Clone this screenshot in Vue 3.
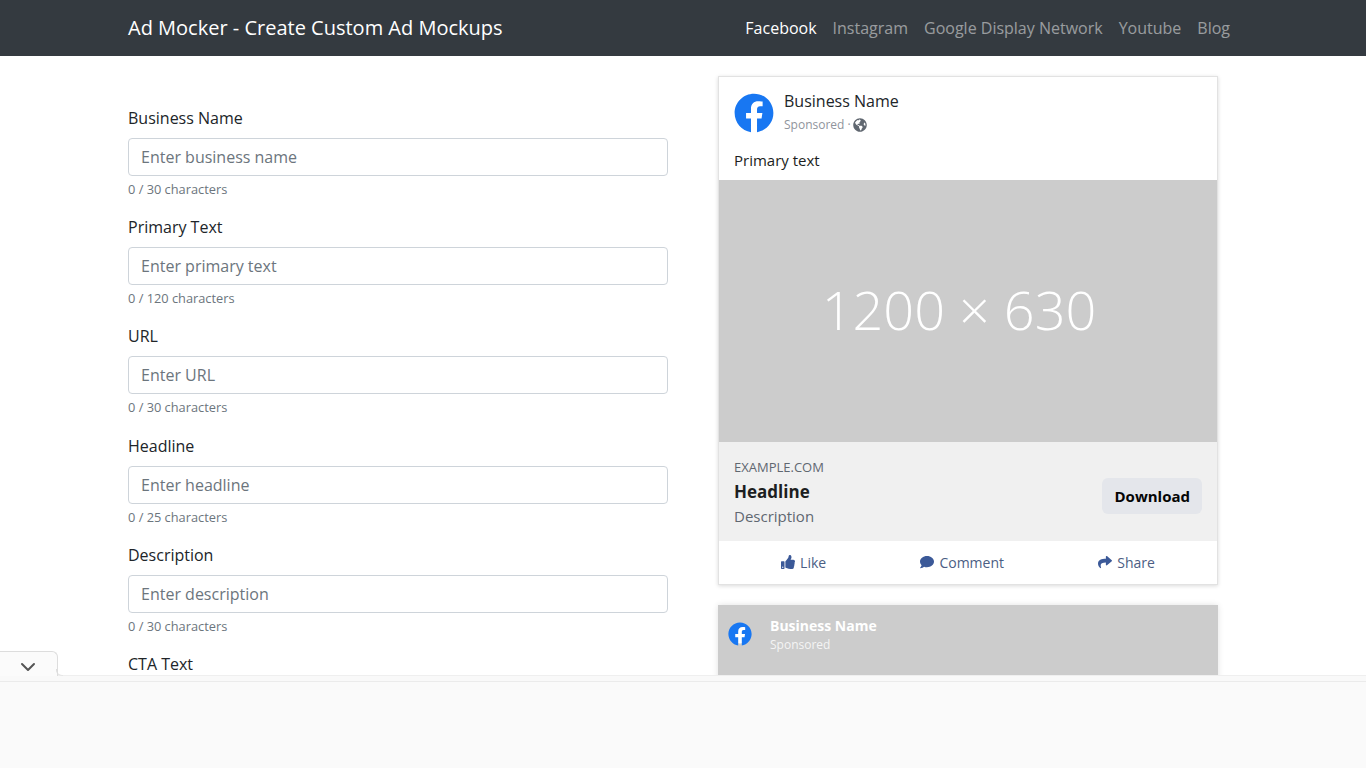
<template>
  <div class="page">
    <nav class="navbar">
      <a class="brand">Ad Mocker - Create Custom Ad Mockups</a>
      <ul class="nav-links">
        <li v-for="(link, i) in links" :key="link" :class="{ active: i === 0 }">{{ link }}</li>
      </ul>
    </nav>

    <main class="content">
      <form class="ad-form">
        <div v-for="field in fields" :key="field.label" class="form-group">
          <label>{{ field.label }}</label>
          <input type="text" :placeholder="field.placeholder" />
          <small>0 / {{ field.max }} characters</small>
        </div>
      </form>

      <section class="previews">
        <article class="fb-card">
          <header class="fb-head">
            <svg class="fb-logo" viewBox="0 0 512 512">
              <circle cx="256" cy="256" r="200" fill="#fff" />
              <path fill="#1877f2" :d="fbPath" />
            </svg>
            <div class="fb-who">
              <div class="fb-name">Business Name</div>
              <div class="fb-sponsored">
                Sponsored ·
                <svg class="globe" viewBox="0 0 496 512"><path fill="#606770" :d="globePath" /></svg>
              </div>
            </div>
          </header>
          <p class="fb-primary">Primary text</p>
          <div class="fb-image"><span>1200 × 630</span></div>
          <div class="fb-meta">
            <div>
              <div class="fb-url">EXAMPLE.COM</div>
              <div class="fb-headline">Headline</div>
              <div class="fb-desc">Description</div>
            </div>
            <button type="button" class="fb-cta">Download</button>
          </div>
          <div class="fb-actions">
            <span class="act">
              <svg viewBox="0 0 512 512"><path :d="likePath" /></svg>Like
            </span>
            <span class="act">
              <svg viewBox="0 0 512 512"><path :d="commentPath" /></svg>Comment
            </span>
            <span class="act">
              <svg viewBox="0 0 512 512"><path :d="sharePath" /></svg>Share
            </span>
          </div>
        </article>

        <article class="story-card">
          <svg class="story-logo" viewBox="0 0 512 512">
            <circle cx="256" cy="256" r="200" fill="#fff" />
            <path fill="#1877f2" :d="fbPath" />
          </svg>
          <div>
            <div class="story-name">Business Name</div>
            <div class="story-sponsored">Sponsored</div>
          </div>
        </article>
      </section>
    </main>

    <div class="bottom-panel">
      <button type="button" class="panel-toggle" aria-label="Collapse">
        <svg viewBox="0 0 16 10" width="16" height="10" fill="none" stroke="#555" stroke-width="2" stroke-linecap="round" stroke-linejoin="round">
          <polyline points="2 2 8 8 14 2"></polyline>
        </svg>
      </button>
    </div>
  </div>
</template>

<script setup>
const links = ['Facebook', 'Instagram', 'Google Display Network', 'Youtube', 'Blog'];

const fields = [
  { label: 'Business Name', placeholder: 'Enter business name', max: 30 },
  { label: 'Primary Text', placeholder: 'Enter primary text', max: 120 },
  { label: 'URL', placeholder: 'Enter URL', max: 30 },
  { label: 'Headline', placeholder: 'Enter headline', max: 25 },
  { label: 'Description', placeholder: 'Enter description', max: 30 },
  { label: 'CTA Text', placeholder: 'Enter CTA text', max: 20 }
];

const fbPath = 'M504 256C504 119 393 8 256 8S8 119 8 256c0 123.78 90.69 226.38 209.25 245V327.69h-63V256h63v-54.64c0-62.15 37-96.48 93.67-96.48 27.14 0 55.52 4.84 55.52 4.84v61h-31.28c-30.8 0-40.41 19.12-40.41 38.73V256h68.78l-11 71.69h-57.78V501C413.31 482.38 504 379.78 504 256z';
const globePath = 'M248 8C111.03 8 0 119.03 0 256s111.03 248 248 248 248-111.03 248-248S384.97 8 248 8zm82.29 357.6c-3.9 3.88-7.99 7.95-11.31 11.28-2.99 3-5.1 6.7-6.17 10.71-1.51 5.66-2.73 11.38-4.77 16.87l-17.39 46.85c-13.76 3-28 4.69-42.65 4.69v-27.38c1.69-12.62-7.64-36.26-22.63-51.25-6-6-9.37-14.14-9.37-22.63v-32.01c0-11.64-6.27-22.34-16.46-27.97-14.37-7.95-34.81-19.06-48.81-26.11-11.48-5.78-22.1-13.14-31.65-21.75l-.8-.72a114.792 114.792 0 0 1-18.06-20.74c-9.38-13.77-24.66-36.42-34.59-51.14 20.47-45.5 57.36-82.04 103.2-101.89l24.01 12.01C203.48 89.74 216 82.01 216 70.11v-11.3c7.99-1.29 16.12-2.11 24.39-2.42l28.3 28.3c6.25 6.25 6.25 16.38 0 22.63L264 112l-10.34 10.34c-3.12 3.12-3.12 8.19 0 11.31l4.69 4.69c3.12 3.12 3.12 8.19 0 11.31l-8 8a8.008 8.008 0 0 1-5.66 2.34h-8.99c-2.08 0-4.08.81-5.58 2.27l-9.92 9.65a8.008 8.008 0 0 0-1.58 9.31l15.59 31.19c2.66 5.32-1.21 11.58-7.15 11.58h-5.64c-1.93 0-3.79-.7-5.24-1.96l-9.28-8.06a16.017 16.017 0 0 0-15.55-3.1l-31.17 10.39a11.95 11.95 0 0 0-8.17 11.34c0 4.53 2.56 8.66 6.61 10.69l11.08 5.54c9.41 4.71 19.79 7.16 30.31 7.16s22.59 27.29 32 32h66.75c8.49 0 16.62 3.37 22.63 9.37l13.69 13.69a30.503 30.503 0 0 1 8.93 21.57 46.536 46.536 0 0 1-13.72 32.98zM417 274.25c-5.79-1.45-10.84-5-14.15-9.97l-17.98-26.97a23.97 23.97 0 0 1 0-26.62l19.59-29.38c2.32-3.47 5.5-6.29 9.24-8.15l12.98-6.49C440.2 193.59 448 223.87 448 256c0 8.67-.74 17.16-1.82 25.54L417 274.25z';
const likePath = 'M104 224H24c-13.255 0-24 10.745-24 24v240c0 13.255 10.745 24 24 24h80c13.255 0 24-10.745 24-24V248c0-13.255-10.745-24-24-24zM64 472c-13.255 0-24-10.745-24-24s10.745-24 24-24 24 10.745 24 24-10.745 24-24 24zM384 81.452c0 42.416-25.97 66.208-33.277 94.548h101.723c33.397 0 59.397 27.746 59.553 58.098.084 17.938-7.546 37.249-19.439 49.197l-.11.11c9.836 23.337 8.237 56.037-9.308 79.469 8.681 25.895-.069 57.704-16.382 74.757 4.298 17.598 2.244 32.575-6.148 44.632C440.202 511.587 389.616 512 346.839 512l-2.845-.001c-48.287-.017-87.806-17.598-119.56-31.725-15.957-7.099-36.821-15.887-52.651-16.178-6.54-.12-11.783-5.457-11.783-11.998v-213.77c0-3.2 1.282-6.271 3.558-8.521 39.614-39.144 56.648-80.587 89.117-113.111 14.804-14.832 20.188-37.236 25.393-58.902C282.515 39.293 291.817 0 312 0c24 0 72 8 72 81.452z';
const commentPath = 'M256 32C114.6 32 0 125.1 0 240c0 49.6 21.4 95 57 130.7C44.5 421.1 2.7 466 2.2 466.5c-2.2 2.3-2.8 5.7-1.5 8.7S4.8 480 8 480c66.3 0 116-31.8 140.6-51.4 32.7 12.3 69 19.4 107.4 19.4 141.4 0 256-93.1 256-208S397.4 32 256 32z';
const sharePath = 'M503.691 189.836L327.687 37.851C312.281 24.546 288 35.347 288 56.015v80.053C127.371 137.907 0 170.1 0 322.326c0 61.441 39.581 122.309 83.333 154.132 13.653 9.931 33.111-2.533 28.077-18.631C66.066 312.814 132.917 274.316 288 272.085V360c0 20.7 24.3 31.453 39.687 18.164l176.004-152c11.071-9.562 11.086-26.753 0-36.328z';
</script>

<style scoped>
.page {
  display: flex;
  flex-direction: column;
  height: 768px;
  overflow: hidden;
  font-family: "Open Sans", "Liberation Sans", sans-serif;
  color: #212529;
  background: #fff;
}

.navbar {
  flex: none;
  display: flex;
  align-items: center;
  justify-content: space-between;
  height: 56px;
  padding: 0 128px;
  background: #343a40;
  box-sizing: border-box;
}

.brand {
  padding-bottom: 2px;
  font-size: 20px;
  color: #fff;
}

.nav-links {
  display: flex;
  margin: 0;
  padding: 0;
  list-style: none;
  font-size: 16px;
  color: rgba(255, 255, 255, 0.5);
}

.nav-links li {
  padding: 0 8px;
}

.nav-links li.active {
  color: #fff;
}

.content {
  flex: 1;
  min-height: 0;
  overflow: hidden;
  display: grid;
  grid-template-columns: 540px 500px;
  column-gap: 50px;
  align-items: start;
  padding: 20px 0 0 128px;
}

.ad-form {
  padding-top: 30px;
}

.form-group {
  margin-bottom: 16px;
}

.form-group label {
  display: block;
  margin-bottom: 8px;
  font-size: 16px;
  line-height: 24px;
}

.form-group input {
  display: block;
  width: 100%;
  height: 38px;
  padding: 6px 12px;
  box-sizing: border-box;
  border: 1px solid #ced4da;
  border-radius: 4px;
  font: inherit;
  font-size: 16px;
  color: #495057;
  outline: none;
}

.form-group input::placeholder {
  color: #6c757d;
  opacity: 1;
}

.form-group small {
  display: block;
  margin-top: 4px;
  font-size: 12.8px;
  line-height: 19.2px;
  color: #6c757d;
}

.fb-card {
  border: 1px solid #e2e2e2;
  box-shadow: 0 1px 4px rgba(0, 0, 0, 0.15);
  background: #fff;
}

.fb-head {
  display: flex;
  align-items: flex-start;
  padding: 12px 15px 0;
}

.fb-logo {
  width: 40px;
  height: 40px;
  margin: 4px 10px 0 0;
}

.fb-name {
  font-size: 16px;
  line-height: 24px;
}

.fb-sponsored {
  display: flex;
  align-items: center;
  gap: 2px;
  margin-top: 1px;
  font-size: 12px;
  line-height: 22px;
  color: #90949c;
}

.globe {
  width: 14px;
  height: 14px;
}

.fb-primary {
  margin: 0;
  padding: 13px 15px 9px;
  font-size: 15px;
  line-height: 22px;
  color: #1c1e21;
}

.fb-image {
  display: flex;
  align-items: center;
  justify-content: center;
  height: 262px;
  padding: 0 18px 4px 0;
  box-sizing: border-box;
  background: #ccc;
  color: #fff;
  font-size: 54px;
  font-weight: 300;
}

.fb-meta {
  display: flex;
  align-items: flex-start;
  justify-content: space-between;
  height: 99px;
  padding: 15px 15px 0;
  box-sizing: border-box;
  background: #f0f0f0;
}

.fb-url {
  font-size: 13px;
  line-height: 20px;
  color: #606770;
}

.fb-headline {
  padding-top: 3px;
  font-size: 17px;
  font-weight: 700;
  line-height: 24px;
  color: #1c1e21;
}

.fb-desc {
  font-size: 15px;
  line-height: 24px;
  color: #606770;
}

.fb-cta {
  height: 36px;
  margin-top: 21px;
  padding: 0 12px;
  border: 0;
  border-radius: 6px;
  background: #e4e6eb;
  font: inherit;
  font-size: 15px;
  font-weight: 700;
  color: #050505;
}

.fb-actions {
  display: flex;
  justify-content: space-around;
  height: 43px;
  padding: 0 15px;
  font-size: 14px;
  color: #4b5e84;
}

.act {
  display: flex;
  align-items: center;
  gap: 5px;
}

.act svg {
  width: 14px;
  height: 14px;
  margin-top: -2px;
  fill: #3b5998;
}

.story-card {
  display: flex;
  align-items: flex-start;
  height: 120px;
  margin-top: 20px;
  padding: 11px 10px;
  box-sizing: border-box;
  background: #ccc;
  box-shadow: 0 0 6px rgba(0, 0, 0, 0.12);
  color: #fff;
}

.story-logo {
  width: 24px;
  height: 24px;
  margin: 6px 18px 0 0;
}

.story-name {
  font-size: 14px;
  font-weight: 700;
  line-height: 20px;
}

.story-sponsored {
  font-size: 12px;
  line-height: 18px;
  opacity: 0.8;
}

.bottom-panel {
  position: relative;
  flex: none;
  height: 93px;
  box-sizing: border-box;
  border-top: 1px solid #efefef;
  background: #fafafa;
}

.bottom-panel::before {
  content: "";
  display: block;
  height: 5px;
  border-bottom: 1px solid #ebebeb;
  background: #f9f9f9;
}

.panel-toggle {
  position: absolute;
  left: 0;
  top: -25px;
  display: flex;
  align-items: center;
  justify-content: center;
  width: 56px;
  height: 19px;
  padding: 5px 1px 0 0;
  box-sizing: content-box;
  border: 1px solid #ddd;
  border-bottom: 0;
  border-left: 0;
  border-radius: 0 6px 0 0;
  background: #fbfbfb;
}

.panel-toggle::after {
  content: "";
  position: absolute;
  left: 100%;
  bottom: 0;
  width: 6px;
  height: 6px;
  margin-left: -1px;
  border-left: 1px solid #ddd;
  border-bottom: 1px solid #e6e6e6;
  border-bottom-left-radius: 6px;
}
</style>
